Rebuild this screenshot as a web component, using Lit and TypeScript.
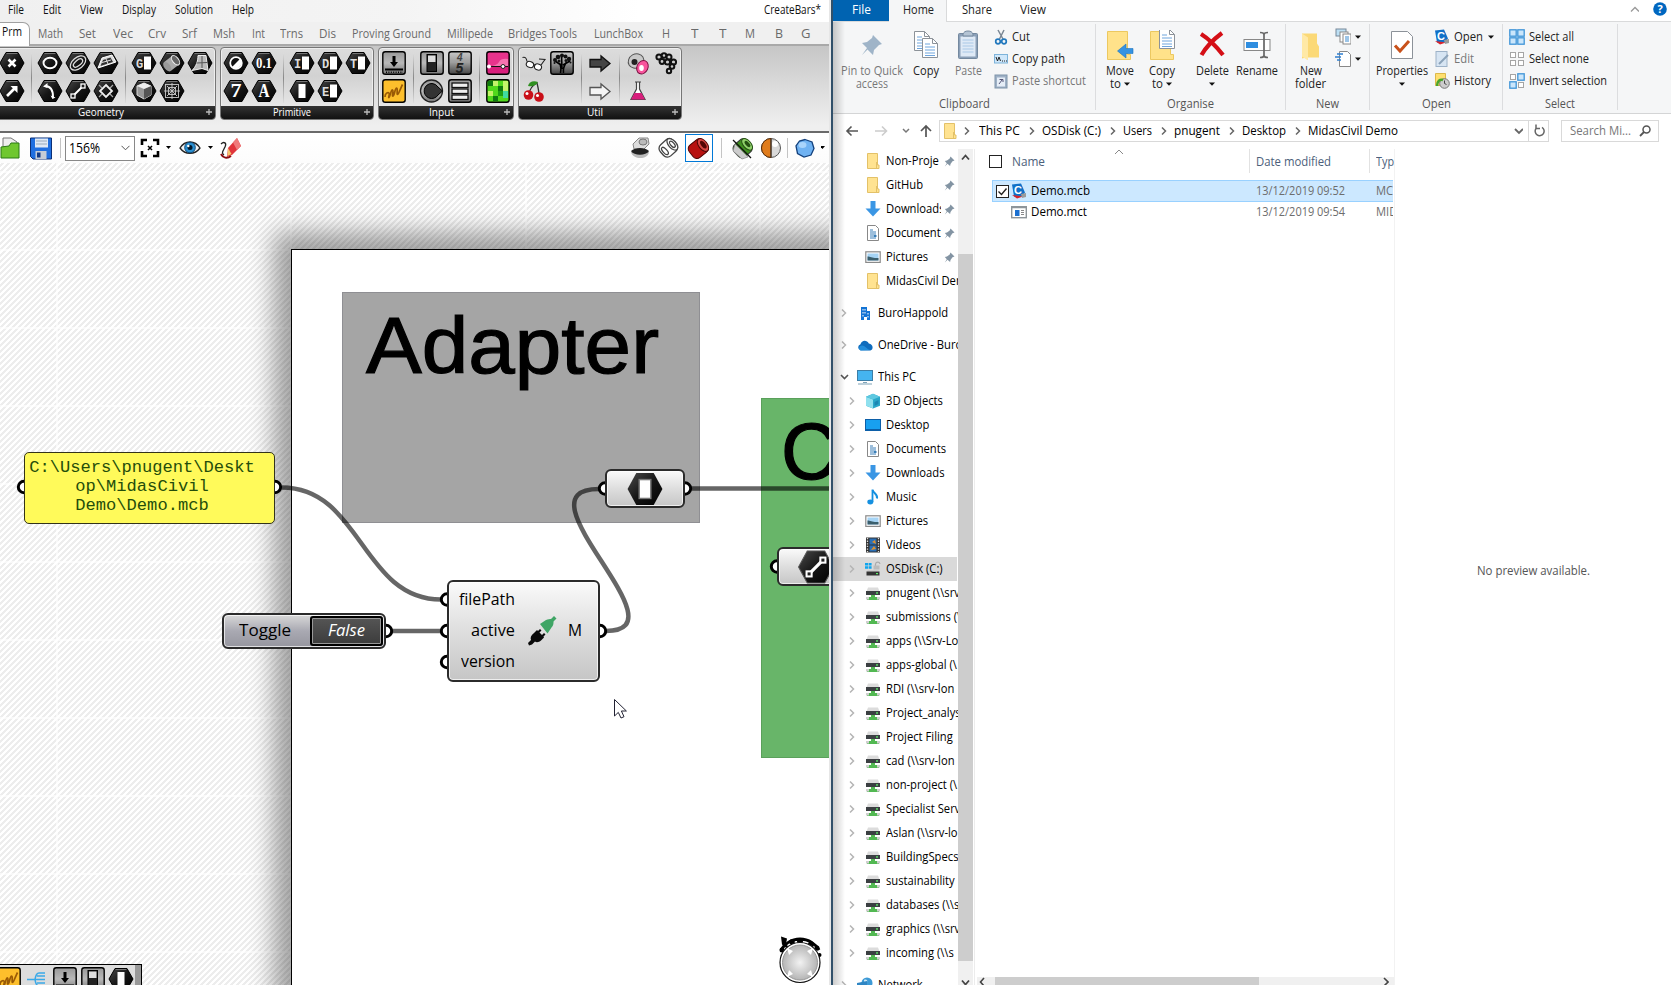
import { LitElement, html, svg, css } from "lit";
import { customElement, property } from "lit/decorators.js";

/** One line of text, squeezed horizontally to a given width (w) or by a factor (k). */
@customElement("fit-label")
class FitLabel extends LitElement {
  @property({ type: Number }) w = 0;
  @property({ type: Number }) k = 0;
  @property() text = "";
  static styles = css`
    :host { display: inline-block; white-space: nowrap; flex: none; }
    span { display: inline-block; transform-origin: 0 50%; white-space: pre; }
  `;
  render() {
    return html`<span>${this.text}</span>`;
  }
  updated() {
    const s = this.renderRoot.querySelector("span") as HTMLElement;
    s.style.transform = "none";
    const nat = s.getBoundingClientRect().width;
    const f = this.w ? (this.w + 1) / nat : this.k || 1;
    s.style.transform = `scaleX(${f})`;
    this.style.width = `${Math.round(nat * f * 10) / 10}px`;
  }
}

const fit = (text: string, w: number) => html`<fit-label .text=${text} .w=${w}></fit-label>`;
const nar = (text: string) => html`<fit-label .text=${text} .k=${0.935}></fit-label>`;

const ic = (w: number, h: number, body: unknown, cls = "") =>
  html`<svg class=${cls} width=${w} height=${h} viewBox="0 0 ${w} ${h}">${body}</svg>`;

const hexShape = svg`<path d="M8 3.500h12l6 10.500-6 10.500H8L2 14z" fill="url(#blk)" stroke="#000" stroke-width="1" stroke-linejoin="round"/><path d="M8.600 4.500h10.800" stroke="#888" stroke-width=".8"/>`;
const hex = (b: unknown) => ic(28, 28, svg`${hexShape}${b}`);
const letterHex = (t: string) =>
  hex(svg`<text x="6" y="18.500" font-family="Liberation Mono" font-size="12" font-weight="bold" fill="#ddd">${t}</text><rect x="14" y="7.500" width="7" height="13" fill="#fff"/>`);
const box = (b: unknown, fill = "url(#gry)") =>
  ic(28, 28, svg`<rect x="2.800" y="2.800" width="22.400" height="22.400" rx="2.500" fill=${fill} stroke="#000" stroke-width="1.400"/>${b}`);

const graffiti = svg`<rect x="4" y="4" width="20" height="20" fill="#fdbf2c"/><path d="M5 20c0-4 3-5 4-4s-1 5 0 4.500 2-8 3.500-7.500-1 6.500.500 6 2-8 3.500-8 0 6.500 1 6.500 3-6 5-10" fill="none" stroke="#9a5a05" stroke-width="1.700"/>`;
const downBoard = svg`<path d="M14 7v7" stroke="#000" stroke-width="3"/><path d="M10 13h8l-4 5z"/><path d="M5 20.500h18" stroke="#000" stroke-width="2"/><path d="M6 23.200h17" stroke="#000" stroke-width="1.600" stroke-dasharray="1 1.400"/>`;
const slider = svg`<rect x="9" y="5.500" width="9.500" height="17" fill="#222" stroke="#000"/><rect x="10" y="6.500" width="7.500" height="6.500" fill="#ddd"/>`;

const G1 = {
  a: [hex(svg`<path d="M10.500 10.500l7 7m0-7l-7 7" stroke="#fff" stroke-width="2.600"/>`), hex(svg`<path d="M9 19l8-8" stroke="#fff" stroke-width="2.600"/><path d="M12.500 9h7v7z" fill="#fff"/>`)],
  b: [
    hex(svg`<ellipse cx="14" cy="14" rx="6.500" ry="5.300" fill="none" stroke="#fff" stroke-width="1.900"/>`),
    hex(svg`<g transform="rotate(-40 14 14)" fill="none" stroke="#ddd"><ellipse cx="14" cy="14" rx="9" ry="5.500" stroke-width="1.300"/><ellipse cx="14" cy="14" rx="5.500" ry="2.700" stroke-width="1.300"/></g>`),
    hex(svg`<path d="M6 19l4-10 10-3 4 7z" fill="#ddd" stroke="#fff"/><path d="M8.500 17l2.500-6 7.500-2.500 2.500 4.500z" fill="#333"/><path d="M14 10l2 5M10 13.500l9-2.500" stroke="#ddd"/>`),
    hex(svg`<path d="M9 9c6 0 8 5 8 11" fill="none" stroke="#fff" stroke-width="2"/><path d="M7 9.500L11.500 6v5zM14.500 18.500l5 2-3 1.500z" fill="#fff"/>`),
    hex(svg`<path d="M10 18l8-8" stroke="#fff" stroke-width="2"/><rect x="7" y="17" width="4" height="4" fill="#222" stroke="#fff" stroke-width="1.300"/><rect x="17" y="7" width="4" height="4" fill="#222" stroke="#fff" stroke-width="1.300"/>`),
    hex(svg`<path d="M14 8l6 6-6 6-6-6z" fill="none" stroke="#eee" stroke-width="1.800"/><path d="M10 11L7 8m11 3l3-3M10 17l-3 3m11-3l3 3" stroke="#aaa" stroke-width="1.200"/>`),
  ],
  c: [
    letterHex("G"),
    hex(svg`<g transform="rotate(-38 14 14)"><rect x="8" y="8.500" width="11" height="11" fill="#aaa"/><ellipse cx="8" cy="14" rx="3" ry="5.500" fill="#999"/><ellipse cx="18.500" cy="14" rx="3" ry="5.500" fill="#666" stroke="#eee"/></g>`),
    hex(svg`<path d="M12 6.500h8l2 15-6-2-10 2c4-4 6-9 6-15z" fill="#bbb" stroke="#eee"/><path d="M16 7v12M10.500 14l11-.5" stroke="#555"/>`),
    hex(svg`<path d="M14 6l7 3v9l-7 4-7-4V9z" fill="#999" stroke="#ddd"/><path d="M14 12l7-3v9l-7 4z" fill="#555"/><path d="M7 9l7 3 7-3-7-3z" fill="#eee"/>`),
    hex(svg`<g stroke="#ccc" stroke-width=".9" fill="none"><rect x="7.500" y="7.500" width="13" height="13"/><path d="M14 6v16M6 14h16M9 9l10 10M19 9L9 19"/><path d="M10.500 10.500h7v7h-7z"/></g>`),
  ],
};
const numTxt = (t: string, s: number) =>
  svg`<text x="14" y=${14 + s * 0.34} text-anchor="middle" font-family="Liberation Serif" font-weight="bold" font-size=${s} fill="#fff" textLength=${s < 17 ? 16 : 11} lengthAdjust="spacingAndGlyphs">${t}</text>`;
const PR = {
  a: [
    hex(svg`<circle cx="14" cy="14" r="5.800" fill="#111" stroke="#fff" stroke-width="1.800"/><path d="M18.200 9.800a6 6 0 0 1-8.400 8.400z" fill="#fff"/>`),
    hex(numTxt("0.1", 15)),
    hex(numTxt("7", 18)),
    hex(numTxt("A", 18)),
  ],
  b: [
    letterHex("I"), letterHex("D"), letterHex("T"),
    hex(svg`<rect x="10.500" y="7" width="7" height="14" fill="#fff"/>`),
    letterHex("E"),
  ],
};
const INP = {
  a: [box(downBoard), box(graffiti, "#fdbf2c")],
  b: [
    box(slider),
    box(svg`<path d="M4 13h20" stroke="#aaa" stroke-width=".6"/><text x="11" y="11.500" font-family="Liberation Sans" font-style="italic" font-weight="bold" font-size="10" fill="#444">4</text><text x="9.500" y="23.500" font-family="Liberation Sans" font-style="italic" font-weight="bold" font-size="14" fill="#222">5</text>`, "url(#gry2)"),
    ic(28, 28, svg`<circle cx="13.500" cy="14" r="11" fill="url(#gry)" stroke="#222" stroke-width="1.300"/><path d="M14 6.500a7.500 7.500 0 0 1 6 3.500l4.500 4-4.500 4a7.500 7.500 0 1 1-6-11.500z" fill="#333" stroke="#000"/>`),
    box(svg`<g fill="#eee" stroke="#111" stroke-width="1.300"><rect x="6" y="6" width="16" height="4.500"/><rect x="6" y="12" width="16" height="4.500"/><rect x="6" y="18" width="16" height="4.500"/></g>`),
  ],
  c: [
    box(svg`<rect x="4" y="4" width="20" height="12" fill="#e8338c"/><path d="M4 17q9 0 11-4t9-3v7z" fill="#f573b0"/><path d="M4 17.500h20" stroke="#111" stroke-width="1.200"/><circle cx="5" cy="17.500" r="2" fill="#fff"/><circle cx="19" cy="17.500" r="2" fill="#fff" stroke="#222"/>`, "#d81e7c"),
    box(svg`<g fill="#0f7a10"><rect x="4" y="4" width="5" height="5"/><rect x="14" y="9" width="5" height="5"/><rect x="9" y="19" width="5" height="5"/></g><g fill="#c4f36a"><rect x="9" y="4" width="5" height="5"/><rect x="19" y="4" width="5" height="10"/><rect x="4" y="14" width="5" height="5"/></g><rect x="19" y="14" width="5" height="7" fill="#3fdca0"/><rect x="14" y="14" width="5" height="5" fill="#1c9e12"/>`, "#50d81c"),
  ],
};
const UT = {
  a: [
    ic(28, 28, svg`<g fill="#fff" stroke="#222" stroke-width="1.100"><path d="M2.500 8.500c3-1 4 1 4.500 4" fill="none"/><ellipse cx="10" cy="15.500" rx="3.800" ry="3" transform="rotate(20 10 15.500)"/><ellipse cx="18" cy="18" rx="3.600" ry="3" transform="rotate(20 18 18)"/><path d="M21 16l4-5.500-6-.5M13.500 15.500l1.500.8" fill="none"/></g>`),
    box(svg`<path d="M12.500 24c1-5 0-8-1-10M15.500 24c-1-5 1-8 3-11M13 16L7 12M15 16l7-4M14 20l-.5-14" stroke="#000" stroke-width="1.600" fill="none"/><g fill="#111"><circle cx="7" cy="11" r="2"/><circle cx="10" cy="8" r="2.300"/><circle cx="14" cy="6.500" r="2"/><circle cx="17.500" cy="7.500" r="2"/><circle cx="21" cy="10" r="2.200"/><circle cx="11" cy="12" r="1.500"/><circle cx="18" cy="11.500" r="1.500"/><circle cx="6.500" cy="14" r="1"/><circle cx="22.500" cy="13.500" r="1"/></g>`, "url(#gry2)"),
    ic(28, 28, svg`<path d="M9 17c1-6 4-9 8-11 1 4 2 8 2 13" fill="none" stroke="#333" stroke-width="1.300"/><path d="M8 9c1-4 5-6 10-4-2 4-6 5-10 4z" fill="#2f8f20"/><circle cx="8.500" cy="18" r="4.800" fill="#c90f18"/><circle cx="19" cy="20" r="4.800" fill="#c90f18"/><circle cx="7" cy="16.500" r="1.500" fill="#fff"/><circle cx="17.500" cy="18.500" r="1.500" fill="#fff"/>`),
  ],
  b: [
    ic(28, 28, svg`<path d="M4 10.500h11V7l9 7.500-9 7.500v-4H4z" fill="#444" stroke="#111" stroke-width="1.300"/>`),
    ic(28, 28, svg`<path d="M4 10.500h11V7l9 7.500-9 7.500v-4H4z" fill="#f5f5f5" stroke="#555" stroke-width="1.300"/>`),
  ],
  c: [
    ic(28, 28, svg`<ellipse cx="12" cy="12" rx="8" ry="7" fill="#c9c9c9" stroke="#555" transform="rotate(-30 12 12)"/><ellipse cx="10.500" cy="13" rx="3" ry="3" fill="#222"/><ellipse cx="18.500" cy="18" rx="5.500" ry="7" fill="#f8549c" stroke="#7c1040" transform="rotate(25 18 18)"/><ellipse cx="17.500" cy="19" rx="2.300" ry="3" fill="#fff"/>`),
    ic(28, 28, svg`<g fill="#ccc" stroke="#111" stroke-width="2"><circle cx="7" cy="8" r="2.600"/><circle cx="12" cy="6.500" r="2.300"/><circle cx="17" cy="8" r="2.500"/><circle cx="10" cy="12.500" r="2.400"/><circle cx="15.500" cy="13" r="2.600"/><circle cx="21.500" cy="13" r="2.600"/><circle cx="20" cy="17.500" r="2.300"/><circle cx="17" cy="22" r="2.200"/></g>`),
    ic(28, 28, svg`<path d="M11 5h6M12.500 5v7L7 22.500h14L15.500 12V5" fill="#fff" stroke="#444" stroke-width="1.200"/><path d="M10.500 16h7l3.500 6.500H7z" fill="#d81e7c"/>`),
  ],
};

const TABS: [string, number, number][] = [
  ["Math", 38, 24], ["Set", 79, 16], ["Vec", 113, 19], ["Crv", 148, 17], ["Srf", 182, 14], ["Msh", 213, 21], ["Int", 252, 12],
  ["Trns", 280, 22], ["Dis", 319, 16], ["Proving Ground", 352, 78], ["Millipede", 447, 45], ["Bridges Tools", 508, 68],
  ["LunchBox", 594, 48], ["H", 662, 7], ["T", 691, 6.5], ["T", 719, 6.5], ["M", 745, 9], ["B", 775, 7], ["G", 801, 8.500],
];

const chevR = html`<svg width="8" height="10" viewBox="0 0 8 10"><path d="M2 1.500L5.500 5 2 8.500" fill="none" stroke="currentColor" stroke-width="1.500"/></svg>`;
const caret = ic(6, 4, svg`<path d="M0 .5h6L3 3.700z" fill="#111"/>`, "caret");

const folder = ic(16, 16, svg`<path d="M2.500.5h10v11.500h1.500v3.500h-11.500z" fill="#ffe391" stroke="#e3c168"/><path d="M11.500 9v6" stroke="#e3c168"/>`);
const drive = ic(16, 16, svg`<path d="M3 2.500h10l1.500 4h-13z" fill="#dcdcdc"/><rect x="1" y="6" width="14" height="4" fill="#3b3f42"/><rect x="11" y="7.300" width="2" height="1.300" fill="#5ef06a"/><path d="M6 10h4v2h4v3H2v-3h4z" fill="#52b852"/><path d="M1 12h3v2.500H1zM12 12h3v2.500h-3z" fill="#cfcfcf"/>`);
const docI = ic(16, 16, svg`<path d="M2.500.5h8l3 3v12h-11z" fill="#fff" stroke="#888"/><path d="M5 5h3M5 7h6M5 9h6M5 11h3M5 13h6" stroke="#3a7fb8"/><rect x="8.500" y="10" width="3" height="2" fill="#3a7fb8"/>`);
const downI = ic(16, 16, svg`<path d="M5.500 0h5v7.500H15.500L8 15.500.5 7.500h5z" fill="#3a96e4"/>`);
const picI = ic(16, 16, svg`<rect x=".8" y="2.800" width="14.400" height="10.600" fill="#fff" stroke="#8a8a8a" stroke-width="1.200"/><rect x="2.500" y="4.500" width="11" height="7" fill="#a6d4f5"/><path d="M2.500 7.500c3 0 5 2 11 1.500v2.500h-11z" fill="#3b5f6d"/>`);
const pcI = ic(16, 16, svg`<rect x=".5" y="1.500" width="15" height="10" fill="#45b4f0" stroke="#3d7ea6"/><path d="M6 13.500h4M1 15h14" stroke="#7fa3b8" stroke-width="1.200"/>`);
const bldI = ic(16, 16, svg`<path d="M4 2h6v4h3v9h-3v-3H7v3H4z" fill="#1273d4"/><path d="M5.500 4h1v1.500h-1zM7.500 4h1v1.500h-1zM5.500 7h1v1.500h-1zM7.500 7h1v1.500h-1zM5.500 10h1v1.500h-1zM10.500 8h1v1.500h-1zM10.500 11h1v1.500h-1z" fill="#fff"/>`);
const cloudI = ic(16, 16, svg`<path d="M3.500 13.500a3.300 3.300 0 0 1 0-6.300C4.500 3 10 2.500 11.800 6.500c4.500.5 5 6 1.500 7z" fill="#0f6cbd"/><path d="M4 13.500c-3-1-2-5 1-5 4 0 5 5 9 4.500z" fill="#2b9be8" opacity=".7"/>`);
const cubeI = ic(16, 16, svg`<path d="M8 .8l7 3v9L8 15.500 1 12.800v-9z" fill="#2aa7c9"/><path d="M1 3.800l7 2.700v9L1 12.800z" fill="#8fe0ee"/><path d="M8 .8l7 3-7 2.700-7-2.700z" fill="#5ec8e0"/><path d="M9.500 9l4-2v4l-4 2z" fill="#1a86b3"/>`);
const deskI = ic(16, 16, svg`<rect x=".5" y="2.500" width="15" height="11" fill="#18a0f0" stroke="#0c5fa8"/><path d="M1 12.500h14" stroke="#0c5fa8"/>`);
const musicI = ic(16, 16, svg`<path d="M7.500.5c.5 4 5.500 4 4.500 9" fill="none" stroke="#1590e0" stroke-width="2"/><path d="M7.500 1v12" stroke="#1590e0" stroke-width="1.800"/><ellipse cx="5.300" cy="13" rx="3" ry="2.400" fill="#1590e0"/>`);
const vidI = ic(16, 16, svg`<rect x="1" y=".5" width="14" height="15" fill="#333"/><path d="M2.500 1v14M13.500 1v14" stroke="#ddd" stroke-width="1.300" stroke-dasharray="1.300 1.300"/><rect x="4.500" y="1.500" width="7" height="6" fill="#2b6fb5"/><rect x="4.500" y="8.500" width="7" height="6" fill="#2b6fb5"/><path d="M7 5l3-2 1 4zM6 13l3-4 2 3z" fill="#e0902a"/>`);
const osI = ic(16, 16, svg`<path d="M0 2h3v2.600H0zM3.600 2h3v2.600h-3zM0 5.200h3v2.600H0zM3.600 5.200h3v2.600h-3z" fill="#10a5ee"/><path d="M10.500 5V3a2.300 2.300 0 0 1 4.500 0" fill="none" stroke="#aaa" stroke-width="1.200"/><rect x="8.500" y="4.500" width="6" height="4" fill="#bbb"/><path d="M3 9h10l1.500 1.500h-13z" fill="#ccc"/><rect x="1.500" y="10.500" width="13" height="4" fill="#333"/><rect x="11" y="12" width="2" height="1.200" fill="#5ef06a"/>`);
const netI = ic(16, 16, svg`<circle cx="10" cy="6" r="5.500" fill="#3d9ad6"/><path d="M7 3c2-1 4 0 3 2s-3 2-3-2z" fill="#cfe9f7"/><path d="M0 6l10-2v8L0 9z" fill="#2f86c4"/>`);
const pin = ic(11, 11, svg`<path d="M6.500.5l4 4-2 .7L6.500 8l-.4 2-2.600-2.200L.8 10.500l2-3.200L.8 5l2.200-.5 2.700-2z" fill="#8394a3"/>`, "pin");

type Row = [string, unknown];
const QUICK: [string, unknown, boolean][] = [
  ["Non-Proje", folder, true], ["GitHub", folder, true], ["Downloads", downI, true], ["Documents", docI, true], ["Pictures", picI, true], ["MidasCivil Demo", folder, false],
];
const PCROWS: Row[] = [
  ["3D Objects", cubeI], ["Desktop", deskI], ["Documents", docI], ["Downloads", downI], ["Music", musicI], ["Pictures", picI], ["Videos", vidI], ["OSDisk (C:)", osI],
  ["pnugent (\\\\srv", drive], ["submissions (\\", drive], ["apps (\\\\Srv-Lo", drive], ["apps-global (\\", drive], ["RDI (\\\\srv-lon", drive], ["Project_analys", drive],
  ["Project Filing", drive], ["cad (\\\\srv-lon", drive], ["non-project (\\", drive], ["Specialist Serv", drive], ["Aslan (\\\\srv-lo", drive], ["BuildingSpecs", drive],
  ["sustainability", drive], ["databases (\\\\s", drive], ["graphics (\\\\srv", drive], ["incoming (\\\\s", drive],
];
const CRUMBS: [string, number][] = [["This PC", 40], ["OSDisk (C:)", 58], ["Users", 28], ["pnugent", 45], ["Desktop", 43]];

const mcb = ic(16, 16, svg`<path d="M1 1.500l9-1 4 9-3 4H3z" fill="#1170c8"/><path d="M1 12l5 3.500 6-2z" fill="#d8232a"/><text x="3" y="11" font-family="Liberation Sans" font-weight="bold" font-size="11" fill="#fff">C</text><path d="M10 11l5-1v4l-4 1z" fill="#9a9a9a"/>`);
const mct = ic(16, 14, svg`<rect x=".7" y="1.700" width="14.600" height="11" fill="#fff" stroke="#8d9499" stroke-width="1.400"/><path d="M1 2.500h14" stroke="#8d9499" stroke-width="1.500"/><rect x="4" y="5" width="4.500" height="6" fill="#1a6fd0"/><path d="M10 5.500h3M10 7.500h3M10 9.500h3" stroke="#888"/>`);
const bigFolder = svg`<path d="M1.500 1.500h20v23h3v5h-23z" fill="#ffe28a" stroke="#ecc860"/>`;
const sheet = (x: number, y: number) => svg`<path d="M${x} ${y}h10l5 5v14h-15z" fill="#fff" stroke="#8c9299"/><path d="M${x + 10} ${y}v5h5" fill="none" stroke="#8c9299"/><path d="M${x + 2.500} ${y + 5.500}h5m-5 3h10m-10 3h10m-10 3h10m-10 2.500h10" stroke="#6fa5dd"/>`;

@customElement("app-root")
class AppRoot extends LitElement {
  static styles = css`
    :host { display: block; width: 1671px; height: 985px; overflow: hidden; font-family: "Open Sans", "Noto Sans", sans-serif; font-size: 12px; line-height: 16px; color: #000; background: #fff; }
    * { box-sizing: border-box; }
    svg { display: block; flex: none; }
    .defs { position: absolute; width: 0; height: 0; }
    .desk { display: flex; height: 985px; }

    .gh { width: 829px; display: flex; flex-direction: column; overflow: hidden; }
    .menu { height: 22px; flex: none; display: flex; gap: 19px; padding: 2px 8px 0; background: linear-gradient(90deg, #f0f0f0 0, #f4f4f4 400px, #fff 640px); color: #111; }
    .menu .doc { margin-left: auto; }
    .tabs { height: 24px; flex: none; display: flex; background: #f0f0f0; border-bottom: 2px solid #a9a9a9; color: #6a6a6a; }
    .tab0 { width: 30px; height: 24px; background: #fff; border: 1px solid #a0a0a0; border-left: 0; border-bottom: 0; border-radius: 0 7px 0 0; padding: 1px 0 0 2px; color: #111; }
    .tabx { width: 8px; }
    .tab { padding-top: 4px; }
    .ribbon { height: 85px; flex: none; display: flex; gap: 4px; padding-top: 1px; background: linear-gradient(#c6c6c6, #e0e0e0 50px, #efefef 80px); }
    .grp { height: 73px; border: 1px solid #777; border-radius: 4px; background: linear-gradient(#dcdcdc, #d2d2d2 40%, #efefef); overflow: hidden; display: flex; flex-direction: column; box-shadow: inset 0 0 0 1px #eee; }
    .grp:first-child { margin-left: -4px; }
    .sets { display: flex; height: 58px; padding: 1px 1px 0; }
    .set { display: grid; grid-auto-rows: 28px; grid-template-columns: repeat(var(--n), 28px); }
    .n1 { --n: 1; } .n2 { --n: 2; } .n3 { --n: 3; }
    .vs { width: 10px; padding: 4px 4.500px; }
    .vs::after { content: ""; display: block; width: 1px; height: 50px; background: linear-gradient(#ddd, #888, #ddd); }
    .cap { flex: 1; background: linear-gradient(#333, #111); color: #fff; display: grid; grid-template-columns: 1fr 10px; justify-items: center; align-items: center; font-size: 11.500px; line-height: 12px; padding-bottom: 1px; }
    .cap svg { justify-self: start; }

    .bar { height: 32px; flex: none; display: flex; align-items: center; border-top: 2px solid #6a6a6a; background: linear-gradient(#fff, #fcfcfc); }
    .combo { width: 70px; height: 25px; border: 1px solid #888; background: #fff; display: flex; align-items: center; justify-content: space-between; padding: 0 4px 0 3px; font-size: 14px; margin: 0 5px 0 4px; }
    .vline { width: 1px; height: 20px; background: #c4c4c4; }
    .on { border: 1px solid #0078d7; width: 28px; height: 28px; display: flex; align-items: center; justify-content: center; }
    .right { margin-left: auto; display: flex; align-items: center; }

    .canvas { flex: 1; position: relative; overflow: hidden; background-color: #fff; }
    .plane { position: absolute; left: 0; top: -163px; width: 829px; height: 985px; }
    .plane > * { position: absolute; }
    .hatch { inset: 0; background: repeating-linear-gradient(135deg, #fff 0 2.100px, #ededed 2.100px 4.240px); }
    .glines { inset: 0; }
    .page { left: 291px; top: 249px; width: 700px; height: 900px; background: #fff; border: 1px solid #000; box-shadow: 0 0 24px 17px rgba(0,0,0,.36); }
    .g { font-family: "Liberation Sans", Arial, sans-serif; font-size: 79px; line-height: 92px; -webkit-text-stroke: 1.200px #000; }
    .ga { left: 342px; top: 292px; width: 358px; height: 231px; background: #a5a5a5; border: 1px solid #8f8f93; padding: 7px 0 0 23px; }
    .gb { left: 761px; top: 398px; width: 80px; height: 360px; background: #68b569; border: 1px solid #5aa05b; padding: 7px 0 0 19px; }
    .node { border: 2px solid #2b2b2b; border-radius: 6px; background: linear-gradient(#fafafa, #dedede 50%, #c6c6c6); box-shadow: inset 0 0 0 1px rgba(255,255,255,.7); display: flex; }
    .panel { left: 24px; top: 452px; width: 251px; height: 71.500px; background: #fffa5a; border: 1.500px solid #33331a; border-radius: 5px; font-family: "Liberation Mono", monospace; font-size: 17.100px; line-height: 19px; color: #244d0a; display: flex; flex-direction: column; align-items: center; padding: 5px 15px 0 0; }
    .panel div { white-space: pre; }
    .toggle { left: 222px; top: 613px; width: 164px; height: 36px; background: linear-gradient(#d8d8d8, #a9a9b2 50%, #96969f); padding: 1px; align-items: center; justify-content: space-between; padding-left: 15px; font-size: 16px; }
    .toggle fit-label { margin-top: -2px; }
    .false { width: 73px; height: 30px; border: 2px solid #000; border-radius: 3px; background: linear-gradient(#555, #3c3c3c); box-shadow: inset 0 0 0 1px #999; color: #fff; font-style: italic; display: flex; justify-content: center; align-items: center; padding-right: 1px; }
    .comp { left: 447px; top: 580px; width: 153px; height: 102px; font-size: 16.500px; align-items: center; padding: 0 0 2px 2px; }
    .ins { width: 64px; display: flex; flex-direction: column; align-items: flex-end; gap: 13.300px; line-height: 18px; }
    .comp svg { margin: 2px 11px 0 12px; }
    .param { left: 605px; top: 469px; width: 80px; height: 39px; align-items: center; justify-content: center; padding-right: 1px; }
    .param2 { left: 777px; top: 547px; width: 80px; height: 39px; align-items: center; padding-left: 18px; }
    .strip { left: -6px; top: 964px; width: 148px; height: 30px; border: 1px solid #000; background: linear-gradient(90deg, #ddd 140px, #999 140px); display: flex; }

    .gap { width: 4px; background: linear-gradient(90deg, #e6e6e6 2px, #31506a 2px); }

    .ex { flex: 1; display: flex; flex-direction: column; background: #fff; color: #222; min-width: 0; position: relative; }
    .shade { position: absolute; left: 0; top: 22px; bottom: 0; width: 12px; background: linear-gradient(90deg, rgba(0,0,0,.2), transparent); pointer-events: none; }
    .etabs { height: 22px; flex: none; display: flex; border-bottom: 1px solid #d9dadb; }
    .etabs div { display: flex; padding-top: 2px; }
    .etabs .file { width: 56px; height: 21px; background: #0063b1; color: #fff; padding-left: 19px; }
    .etabs .home { width: 58px; height: 22px; background: #f5f6f7; border-right: 1px solid #d9dadb; padding-left: 14px; }
    .etabs .help { margin-left: auto; padding-right: 4px; gap: 14px; }
    .rib { height: 92px; flex: none; display: flex; background: #f5f6f7; border-bottom: 1px solid #d4d5d6; }
    .rg { height: 86px; margin-top: 2px; border-right: 1px solid #dcdddf; display: flex; flex-direction: column; align-items: center; }
    .rg > .lab { margin-top: auto; color: #555; height: 16px; margin-bottom: -2px; }
    .rgb { display: flex; width: 100%; height: 70px; }
    .big { display: flex; flex-direction: column; align-items: center; line-height: 13px; padding-top: 6px; }
    .big svg { margin-bottom: 4px; }
    .big .caret { margin: 0; }
    .big .r { display: flex; gap: 3px; align-items: center; }
    .dim { color: #777; }
    .list3 { display: flex; flex-direction: column; padding-top: 2px; }
    .list3 div { height: 22px; display: flex; align-items: center; gap: 4px; }
    .addr { height: 35px; flex: none; display: flex; align-items: center; padding: 0 12.500px 1px 12px; }
    .abox { margin-left: 7px; width: 610px; height: 22px; border: 1px solid #d9d9d9; display: flex; align-items: center; color: #000; padding-left: 2px; }
    .abox svg { color: #666; }
    .cs { padding: 0 6.500px 0 7.500px; }
    .cs0 { padding: 0 8px 0 5px; }
    .sbox { margin-left: 12px; width: 98px; height: 22px; border: 1px solid #d9d9d9; display: flex; align-items: center; color: #777; padding-left: 8px; gap: 8px; }
    .bodyr { flex: 1; display: flex; min-height: 0; }
    .nav { width: 124.500px; padding-top: 0; overflow: hidden; color: #000; }
    .nr { height: 24px; display: flex; align-items: center; overflow: hidden; white-space: nowrap; }
    .nr.l1 { padding-left: 7px; }
    .nr.l2 { padding-left: 14.500px; }
    .nr.q { padding-left: 32px; }
    .nr > i { width: 14px; color: #b5b5b5; display: flex; flex: none; }
    .nr.l1 > i + svg { margin: 0 5px 0 3px; }
    .nr.l2 > svg { margin: 0 5px 0 3.500px; }
    .nr.q > svg { margin-right: 5px; }
    .nr.q .tx { width: 55px; overflow: hidden; display: flex; }
    .nr.q.np .tx { width: 80px; }
    .nr.q .pin { margin: 0 0 0 3px; }
    .sel { background: #d9d9d9; width: 124px; }
    .s8 { height: 8px; }
    .vsb { width: 15px; background: #f0f0f0; display: flex; flex-direction: column; align-items: center; padding-top: 5px; }
    .vsb .th { width: 15px; height: 708px; margin-top: 93px; background: #cdcdcd; }
    .files { width: 421px; margin-left: 1.500px; border-left: 1px solid #ececec; border-right: 1px solid #f2f2f2; display: flex; flex-direction: column; overflow: hidden; }
    .hd { height: 24px; display: flex; color: #4c607a; }
    .hd > div { border-right: 1px solid #e2e2e2; height: 24px; padding: 5px 0 0; display: flex; }
    .hd > .c3 { border: 0; padding-left: 6px; }
    .ck { width: 13px; height: 13px; border: 1px solid #222; background: #fff; flex: none; }
    .hd > .c1 { width: 275px; padding-left: 14px; gap: 10px; }
    .c1 .ck { margin-top: 1px; }
    .sort { margin-left: 59px; margin-top: -6px; }
    .hd > .c2 { width: 120px; padding-left: 6px; }
    .fr { height: 21px; margin: -1px 1px 0 17px; display: flex; align-items: center; color: #000; overflow: hidden; border: 1px solid transparent; border-right: 0; }
    .fr.on2 { background: #cce8ff; border-color: #99d1ff; height: 22px; margin-top: 7px; }
    .fr .n { width: 258px; flex: none; display: flex; align-items: center; padding-left: 3px; padding-right: 6px; }
    .fr .dt { width: 125px; flex: none; color: #6d6d6d; display: flex; padding-left: 5px; }
    .fr .ty { color: #6d6d6d; width: 18px; overflow: hidden; display: flex; flex: none; }
    .fr .sp { width: 13px; height: 13px; }
    .fr .n > svg { margin: 0 4px 0 2px; }
    .hsb { margin-top: auto; height: 8px; background: #f0f0f0; display: flex; margin-left: 2px; overflow: hidden; }
    .hsb .t { width: 264px; margin-left: 10px; background: #cdcdcd; margin-right: 122px; }
    .prev { flex: 1; display: flex; justify-content: center; padding: 414px 0 0 1px; color: #555; }
  `;

  grp(name: string, w: number, wd: number, sets: [string, unknown[]][]) {
    return html`<div class="grp" style="width:${wd}px"><div class="sets">${sets.map(
      ([c, items], i) => html`${i ? html`<div class="vs"></div>` : ""}<div class="set ${c}">${items}</div>`
    )}</div><div class="cap">${fit(name, w)}${ic(8, 8, svg`<path d="M4 1v6M1 4h6" stroke="#bbb" stroke-width="1.300"/>`)}</div></div>`;
  }

  grasshopper() {
    const ends = TABS.map((t, i) => (i + 1 < TABS.length ? TABS[i + 1][1] : 829) - t[1]);
    return html`<div class="gh">
      <div class="menu">${fit("File", 15)}${fit("Edit", 17)}${fit("View", 22)}${fit("Display", 33)}${fit("Solution", 37)}${fit("Help", 21)}<span class="doc">${fit("CreateBars*", 56)}</span></div>
      <div class="tabs"><div class="tab0">${fit("Prm", 19)}</div><div class="tabx"></div>
        ${TABS.map((t, i) => html`<div class="tab" style="width:${ends[i]}px">${fit(t[0], t[2])}</div>`)}</div>
      <div class="ribbon">
        ${this.grp("Geometry", 45, 220, [["n1", G1.a], ["n3", G1.b], ["n3", G1.c]])}
        ${this.grp("Primitive", 37, 154, [["n2", PR.a], ["n3", PR.b]])}
        ${this.grp("Input", 24, 136, [["n1", INP.a], ["n2", INP.b], ["n1", INP.c]])}
        ${this.grp("Util", 15, 164, [["n2", UT.a], ["n1", UT.b], ["n2", UT.c]])}
      </div>
      <div class="bar">
        ${ic(22, 24, svg`<path d="M3 8V2h8l6 4v6H3z" fill="#eee" stroke="#777"/><path d="M1 22V11l8-1 2-3h8v15z" fill="#6fc72f" stroke="#2b7a14"/>`)}
        ${ic(38, 24, svg`<path d="M8.500 2h21v21H11l-2.500-2.500z" fill="#1f6fe0" stroke="#0b2f75"/><rect x="13" y="2.500" width="13" height="9" fill="#dfe9f5"/><path d="M14 5h11M14 8h11" stroke="#9ab"/><rect x="13.500" y="15" width="11" height="8" fill="#c6cdd6"/><rect x="15" y="16.500" width="3.500" height="5" fill="#123a86"/>`)}
        <div class="vline"></div>
        <div class="combo">${fit("156%", 30)}${ic(9, 6, svg`<path d="M.5.8l4 4 4-4" fill="none" stroke="#555"/>`)}</div>
        ${ic(20, 20, svg`<path d="M2 7V2h5M13 2h5v5M18 13v5h-5M7 18H2v-5" fill="none" stroke="#000" stroke-width="2.600"/><path d="M8 8l4 4m0-4l-4 4" stroke="#000" stroke-width="1.500"/>`)}
        <svg width="19" height="6" viewBox="-6 0 19 6"><path d="M0 1h5L2.500 4z"/></svg>
        ${ic(22, 18, svg`<path d="M1 9c5-8 15-8 20 0-5 7-15 7-20 0z" fill="#f4f4f4" stroke="#222" stroke-width="1.300"/><circle cx="11" cy="8.500" r="5.300" fill="#2a8fd0" stroke="#0e4a7a"/><circle cx="11" cy="8.500" r="2.500" fill="#02182b"/><circle cx="9.300" cy="7" r="1.200" fill="#fff"/>`)}
        <svg width="19" height="6" viewBox="-7 0 19 6"><path d="M0 1h5L2.500 4z"/></svg>
        ${ic(22, 22, svg`<path d="M1 7c3-3 6-1 4 3s-4 6-1 8" fill="none" stroke="#222" stroke-width="1.300"/><path d="M8 11l9-10 4 8-9 9-5 2z" fill="#e0353b"/><path d="M13 5.500l4-4.500 4 8-4 4z" fill="#f07a7a"/><path d="M8 11l3.500 6-4 2z" fill="#f6c66b"/><path d="M1 17c2 4 6 5 10 2" stroke="#8a0b10" stroke-width="2" fill="none"/>`)}
        <div class="right">
          ${ic(28, 24, svg`<g transform="translate(-2 0)"><path d="M9 13l-1-5 6-6h9l1 6-6 6z" fill="#ddd" stroke="#888"/><path d="M6 16c3-4 15-4 18 0-1 8-16 8-18 0z" fill="#bbb"/><path d="M6 15c4-4 14-4 18 0-3 5-15 5-18 0z" fill="#222"/><ellipse cx="18" cy="6" rx="4" ry="3" fill="#bbb" stroke="#777"/></g>`)}
          ${ic(30, 24, svg`<g transform="rotate(-42 14 12)" fill="#fff" stroke="#444" stroke-width="1.300"><rect x="5" y="4" width="17" height="15" rx="5"/><ellipse cx="19" cy="11.500" rx="3.800" ry="7"/><ellipse cx="19" cy="11.500" rx="1.800" ry="3.800"/><ellipse cx="9" cy="11.500" rx="2" ry="4.500"/></g>`)}
          <div class="on">${ic(26, 24, svg`<g transform="rotate(-38 13 12)"><rect x="3" y="4" width="18" height="16" rx="5" fill="#b8110f" stroke="#4c0504"/><ellipse cx="18" cy="12" rx="4.300" ry="7.500" fill="#d84743" stroke="#4c0504"/><ellipse cx="18.500" cy="12" rx="2.200" ry="4.500" fill="#520504"/></g>`)}</div>
          <svg width="18" height="20" viewBox="0 0 18 20"><path d="M8.500 0v20" stroke="#c4c4c4"/></svg>
          ${ic(24, 24, svg`<g transform="rotate(-42 12 12)"><rect x="3" y="4" width="17" height="16" rx="5" fill="#3f8f1f" stroke="#333"/><ellipse cx="17.500" cy="12" rx="3.800" ry="7" fill="#8fd06a" stroke="#245012"/><ellipse cx="18" cy="12" rx="1.800" ry="3.800" fill="#245012"/></g><path d="M4 8l13 13-6 2-9-8z" fill="#ccc" stroke="#888" stroke-width=".7"/><path d="M2 4l18 18" stroke="#111" stroke-width="1.300"/>`)}
          ${ic(32, 24, svg`<circle cx="16" cy="12" r="9.500" fill="#d9d9d9" stroke="#555"/><path d="M16 2.500a9.500 9.500 0 0 0 0 19z" fill="#e07c1c" stroke="#5c2d05"/><path d="M16 3v18" stroke="#333"/><circle cx="20" cy="8" r="3" fill="#fff"/>`)}
          <div class="vline"></div>
          ${ic(33, 24, svg`<path d="M17 3.500l7 2.500 2 6.500-3 6.500-7 2-6.500-3.500L8 10l3.500-5z" fill="#6fb2f2" stroke="#12407c" stroke-width="1.300"/><ellipse cx="14.500" cy="9" rx="4" ry="3" fill="#a9d4fb"/>`)}
          <svg width="8" height="6" viewBox="0 0 8 6"><path d="M-1 1h5L1.500 4z"/></svg>
        </div>
      </div>
      <div class="canvas"><div class="plane">
        <div class="hatch"></div>
        <svg class="glines" width="829" height="985">${[57, 291, 526, 760].map((x) => svg`<path d="M${x} 163v822" stroke="#fff" stroke-width="1.500" opacity=".85"/>`)}${[172, 250, 328, 406, 484, 562, 640, 718, 796, 874, 952].map((y) => svg`<path d="M0 ${y}h829" stroke="#fff" stroke-width="1.500" opacity=".85"/>`)}</svg>
        <div class="page"></div>
        <div class="g ga">${fit("Adapter", 292)}</div>
        <div class="g gb">C</div>
        <svg width="829" height="985">
          <g fill="none" stroke="#000" stroke-opacity=".6" stroke-width="4.500">
            <path d="M282 487.500C361 487.500 362 599.500 441 599.500M392 631h49M606 631C688 631 512 489 599 489M692 488.500h137"/>
          </g>
          <g fill="#fff" stroke="#000" stroke-width="3">
            ${[[24, 487], [275, 487], [386, 631], [447, 599.500], [447, 631], [447, 662], [600, 631], [605, 488.500], [685, 488.500], [777, 566.500]].map(([x, y]) => svg`<circle cx=${x} cy=${y} r="5.700"/>`)}
          </g>
        </svg>
        <div class="panel"><div>C:\\Users\\pnugent\\Deskt</div><div>op\\MidasCivil</div><div>Demo\\Demo.mcb</div></div>
        <div class="node toggle">${fit("Toggle", 51)}<div class="false">${fit("False", 36)}</div></div>
        <div class="node comp"><div class="ins">${fit("filePath", 55)}${fit("active", 43)}${fit("version", 53)}</div>
          ${ic(30, 30, svg`<path d="M1 27l3-3c-1-2 0-5 3-7l3-3 1 1 2-2 1.500 1.500-2 2 2.500 2.500 2-2 1.500 1.500-2 2 .5 1-3 3c-2 2-5 2-6 1l-3 3-3 1z" fill="#0a0a0a"/><path d="M13 8l6-4c2-1 4-1 5-1l3-3 2.500 2.500-3 3c0 2 0 4-2 6l-4 6z" fill="#3fa565"/>`)}
          ${fit("M", 13)}</div>
        <div class="node param"><svg width="38" height="34" viewBox="1 2.300 26 23.400"><path d="M8 3h12l6 11-6 11H8L2 14z" fill="url(#blk)"/><rect x="10" y="7.500" width="8" height="13" fill="#fff" stroke="#777"/></svg></div>
        <div class="node param2"><svg width="38" height="34" viewBox="1 2.300 26 23.400"><path d="M8 3h12l6 11-6 11H8L2 14z" fill="url(#blk)" stroke="#555" stroke-width=".7"/><path d="M10 18l8-8" stroke="#fff" stroke-width="2.200"/><rect x="7.500" y="17" width="3.500" height="3.500" fill="#222" stroke="#fff" stroke-width="1.400"/><rect x="17" y="7.500" width="3.500" height="3.500" fill="#222" stroke="#fff" stroke-width="1.400"/></svg></div>
        <svg width="829" height="985">
          <path d="M614.500 699.500v16.500l3.800-3.600 2.700 5.600 3-1.300-2.600-5.700h5z" fill="#fff" stroke="#223" stroke-width="1"/>
          <path d="M781 950a22 22 0 0 1 38 0" fill="none" stroke="#000" stroke-width="3"/>
          <g fill="#000"><circle cx="792" cy="942" r="2.800"/><circle cx="800" cy="941" r="3"/><circle cx="811" cy="944.500" r="3"/><circle cx="817" cy="948" r="2.500"/><circle cx="782" cy="950" r="2.500"/><circle cx="819.500" cy="955" r="2"/></g>
          <path d="M781 936.500l6 2-1 6 4 3-3 1-5-4z"/>
          <circle cx="800" cy="962.500" r="20" fill="#fff" stroke="#111" stroke-width="1.200"/>
          <circle cx="800" cy="962.500" r="17.500" fill="url(#sph)" stroke="#999"/>
          <path d="M787 948l6 3-4 4zM813 948l-6 3 4 4zM787 977l6-3-4-4zM813 977l-6-3 4-4z" fill="#fff"/>
        </svg>
        <div class="strip">${box(graffiti, "#fdbf2c")}${ic(28, 28, svg`<path d="M4 14.500h8M22 8h-6q-3 0-4 6.500 1 6.500 4 6.500h6M12 14.500h10M14 11h8M14 18h8" fill="none" stroke="#3aa9e8" stroke-width="1.600"/>`)}${box(downBoard)}${box(slider)}${hex(svg`<rect x="10.500" y="7" width="7" height="14" fill="#fff"/>`)}</div>
      </div></div>
    </div>`;
  }

  explorer() {
    const bigs = (icon: unknown, l1: unknown, l2: unknown, w: number, dim = false) =>
      html`<div class="big ${dim ? "dim" : ""}" style="width:${w}px">${icon}${l1}${l2}</div>`;
    return html`<div class="ex">
      <div class="etabs"><div class="file">${fit("File", 18)}</div><div class="home">${fit("Home", 30)}</div><div style="padding-left:15px">${fit("Share", 29)}</div><div style="padding-left:28px">${fit("View", 25)}</div>
        <div class="help">${ic(10, 14, svg`<path d="M2 9.500L6 5.500l4 4" fill="none" stroke="#999" stroke-width="1.300"/>`)}${ic(14, 14, svg`<circle cx="7" cy="7" r="6.800" fill="#0067c0"/><text x="7" y="11" text-anchor="middle" font-size="11" font-weight="bold" fill="#fff">?</text>`)}</div></div>
      <div class="rib">
        <div class="rg" style="width:263px"><div class="rgb">
          ${bigs(ic(30, 30, svg`<path d="M16 4l9 9-3 1-5 5-1 5-5.500-5.500L5 24l5-7L5 12l5-1 5-4z" fill="#9fb4c8" transform="translate(0 1)"/>`), fit("Pin to Quick", 61), fit("access", 31), 77, true)}
          ${bigs(ic(26, 30, svg`${sheet(1.500, 1.500)}${sheet(9.500, 8.500)}`), fit("Copy", 25), "", 32)}
          ${bigs(ic(24, 30, svg`<rect x="2.500" y="3.500" width="19" height="25" rx="1" fill="#8ba0b8" stroke="#74899f"/><rect x="4.500" y="6.500" width="15" height="20" fill="#dfeaf6"/><path d="M7 4c1-2 2-3 5-3s4 1 5 3v2H7z" fill="#b4c4d4" stroke="#74899f"/><path d="M6.500 10h11m-11 3h11m-11 3h11m-11 3h11m-11 3h11" stroke="#a9c8e6"/>`), fit("Paste", 26), "", 52, true)}
          <div class="list3"><div>${ic(14, 16, svg`<path d="M4 1l5 9M10 1L5.500 10" stroke="#7a8794" stroke-width="1.500"/><circle cx="4" cy="12.500" r="2.300" fill="none" stroke="#2278bd" stroke-width="1.700"/><circle cx="10" cy="12.500" r="2.300" fill="none" stroke="#2278bd" stroke-width="1.700"/>`)}${fit("Cut", 17)}</div>
            <div>${ic(14, 10, svg`<rect x=".5" y=".5" width="13" height="8.500" fill="#cfe7fa" stroke="#7db3da"/><path d="M2 3l1.500 4L5 3l1.500 4M8 7h1m1 0h1m1 0h1" stroke="#222" fill="none"/>`)}${fit("Copy path", 52)}</div>
            <div class="dim">${ic(14, 16, svg`<rect x="1" y="2" width="12" height="13" fill="#9fb1c6" stroke="#7f94aa"/><rect x="3" y="4.500" width="8" height="9" fill="#e6eef7"/><path d="M5 11l3-4m-2.500-.5H9V9" stroke="#557" fill="none"/>`)}${fit("Paste shortcut", 73)}</div></div>
        </div><div class="lab">${fit("Clipboard", 50)}</div></div>
        <div class="rg" style="width:190px"><div class="rgb">
          ${bigs(ic(28, 30, svg`${bigFolder}<path d="M27 18.500v5h-7v4.500l-8.500-7 8.500-7v4.500z" fill="#3593e2" stroke="#1c74bf" stroke-width=".6"/>`), fit("Move", 27), html`<span class="r">${fit("to", 10)}${caret}</span>`, 48)}
          ${bigs(ic(26, 30, svg`${bigFolder}<g transform="translate(10 -1)">${sheet(.5, .5)}</g>`), fit("Copy", 25), html`<span class="r">${fit("to", 10)}${caret}</span>`, 36)}
          ${bigs(ic(26, 30, svg`<path d="M2 4c8 5 15 12 22 21M23 3C15 9 7 17 2.500 25" stroke="#d40f16" stroke-width="4.200" fill="none"/>`), fit("Delete", 32), html`<span style="padding-top:5px">${caret}</span>`, 64)}
          ${bigs(ic(28, 30, svg`<rect x="1" y="9.500" width="26" height="11" fill="#fff" stroke="#888"/><rect x="3" y="12" width="12" height="6" fill="#2f8ee0"/><path d="M17 2.500c3 0 4 .5 4 2v21c0 1.500-1 2-4 2M25 2.500c-3 0-4 .5-4 2v21c0 1.500 1 2 4 2" fill="none" stroke="#666" stroke-width="1.700"/>`), fit("Rename", 41), "", 25)}
        </div><div class="lab">${fit("Organise", 46)}</div></div>
        <div class="rg" style="width:84px"><div class="rgb">
          ${bigs(ic(22, 30, svg`<path d="M2 3.500h15v10l2 3v11H6l-4 1z" fill="#fbd977"/><path d="M2 3.500l6 4v23l-6-4z" fill="#ffe9a6"/>`), fit("New", 21), fit("folder", 30), 49)}
          <div class="list3"><div>${ic(16, 18, svg`<rect x="1" y="1" width="10" height="7" fill="#bde0f5" stroke="#789"/><rect x="5" y="4" width="8" height="10" fill="#fff" stroke="#888"/><rect x="8" y="6" width="8" height="10" fill="#fff" stroke="#888"/><path d="M10 9h4m-4 2h4m-4 2h4" stroke="#3a8bd0"/>`)}${caret}</div>
          <div>${ic(16, 18, svg`<path d="M4.500 1.500h8l3 3v12h-11z" fill="#fff" stroke="#888"/><path d="M2 4h6M0 7h6M2 10h4" stroke="#2f7fd0" stroke-width="1.500"/>`)}${caret}</div></div>
        </div><div class="lab">${fit("New", 22)}</div></div>
        <div class="rg" style="width:133px"><div class="rgb">
          ${bigs(ic(24, 30, svg`<path d="M1.500 1.500h16l5 5v22h-21z" fill="#fff" stroke="#8c9299"/><path d="M5 15.500l5 5.500 9-10" fill="none" stroke="#c8511b" stroke-width="3"/>`), fit("Properties", 51), html`<span style="padding-top:5px">${caret}</span>`, 64)}
          <div class="list3"><div>${mcb}${fit("Open", 28)}<span style="padding-left:1px">${caret}</span></div>
            <div class="dim">${ic(16, 16, svg`<rect x="2" y=".5" width="11" height="15" fill="#d7e5f3" stroke="#9db2c8"/><path d="M5 13L14 4" stroke="#8ca3ba" stroke-width="2"/>`)}${fit("Edit", 19)}</div>
            <div>${ic(16, 16, svg`<path d="M1.500.5h10v12h-10z" fill="#ffdf70" stroke="#dcb84a"/><circle cx="10.500" cy="10.500" r="4.800" fill="#ccc" stroke="#777"/><path d="M10.500 7.500v3l2 1" stroke="#444" fill="none"/><path d="M3 13c0-5 3-7 6-6" stroke="#4aa52c" stroke-width="2.500" fill="none"/>`)}${fit("History", 36)}</div></div>
        </div><div class="lab">${fit("Open", 28)}</div></div>
        <div class="rg" style="width:115px"><div class="rgb"><div class="list3" style="padding-left:6px">
          <div>${ic(16, 16, svg`<g fill="#cbe6fb" stroke="#3f95d8" stroke-width="1.300"><rect x=".8" y=".8" width="6.400" height="6.400"/><rect x="8.800" y=".8" width="6.400" height="6.400"/><rect x=".8" y="8.800" width="6.400" height="6.400"/><rect x="8.800" y="8.800" width="6.400" height="6.400"/></g>`)}${fit("Select all", 44)}</div>
          <div>${ic(16, 16, svg`<g fill="#fff" stroke="#a5a5a5"><rect x="1.500" y="1.500" width="5" height="5"/><rect x="9.500" y="1.500" width="5" height="5"/><rect x="1.500" y="9.500" width="5" height="5"/><rect x="9.500" y="9.500" width="5" height="5"/></g>`)}${fit("Select none", 59)}</div>
          <div>${ic(16, 16, svg`<g fill="#fff" stroke="#a5a5a5"><rect x="1.500" y="1.500" width="5" height="5"/><rect x="9.500" y="9.500" width="5" height="5"/></g><g fill="#cbe6fb" stroke="#3f95d8" stroke-width="1.300"><rect x="8.800" y=".8" width="6.400" height="6.400"/><rect x=".8" y="8.800" width="6.400" height="6.400"/></g>`)}${fit("Invert selection", 77)}</div>
        </div></div><div class="lab">${fit("Select", 29)}</div></div>
      </div>
      <div class="addr">
        ${ic(14, 12, svg`<path d="M13 6H2M6.500 1.500L2 6l4.500 4.500" fill="none" stroke="#555" stroke-width="1.600"/>`)}
        <svg width="30" height="12" viewBox="-16 0 30 12"><path d="M0 6h11M7 1.500L11.500 6 7 10.500" fill="none" stroke="#ccc" stroke-width="1.600"/></svg>
        <svg width="22" height="8" viewBox="-13 0 22 8"><path d="M1 2l3 3 3-3" fill="none" stroke="#777" stroke-width="1.500"/></svg>
        <svg width="21" height="14" viewBox="-9 0 21 14"><path d="M6 13V2M1 7l5-5 5 5" fill="none" stroke="#555" stroke-width="1.700"/></svg>
        <div class="abox">${folder}<span class="cs0">${chevR}</span>
          ${CRUMBS.map(([t, w]) => html`${fit(t, w)}<span class="cs">${chevR}</span>`)}
          ${fit("MidasCivil Demo", 89)}
          <svg style="margin-left:auto" width="12" height="8" viewBox="0 0 12 8"><path d="M4 2l4 4 4-4" fill="none" stroke="#666" stroke-width="1.800"/></svg>
          <svg width="25" height="20" viewBox="0 0 25 20"><path d="M5.500 0v20" stroke="#d9d9d9"/><path d="M13 7.500a4.500 4.500 0 1 0 6-1.200M13 3.500v4h4" fill="none" stroke="#666" stroke-width="1.500"/></svg>
        </div>
        <div class="sbox">${fit("Search Mi...", 60)}${ic(12, 12, svg`<circle cx="7.500" cy="4.500" r="3.500" fill="none" stroke="#555" stroke-width="1.500"/><path d="M5 7L1 11" stroke="#555" stroke-width="1.800"/>`)}</div>
      </div>
      <div class="bodyr">
        <div class="nav">
          ${QUICK.map(([t, i, p]) => html`<div class="nr q ${p ? "" : "np"}">${i}<span class="tx">${nar(t)}</span>${p ? pin : ""}</div>`)}
          <div class="s8"></div>
          <div class="nr l1"><i>${chevR}</i>${bldI}${nar("BuroHappold")}</div><div class="s8"></div>
          <div class="nr l1"><i>${chevR}</i>${cloudI}${nar("OneDrive - Buro")}</div><div class="s8"></div>
          <div class="nr l1"><i>${ic(10, 8, svg`<path d="M1 2l3.500 3.500L8 2" fill="none" stroke="#555" stroke-width="1.600"/>`)}</i>${pcI}${nar("This PC")}</div>
          ${PCROWS.map(([t, i]) => html`<div class="nr l2 ${t.startsWith("OSDisk") ? "sel" : ""}"><i>${chevR}</i>${i}${nar(t)}</div>`)}
          <div class="s8"></div>
          <div class="nr l1"><i>${chevR}</i>${netI}${nar("Network")}</div>
        </div>
        <div class="vsb">${ic(9, 7, svg`<path d="M1 5.500l3.500-4 3.500 4" fill="none" stroke="#444" stroke-width="1.800"/>`)}<div class="th"></div>
          <svg width="9" height="24" viewBox="0 -18 9 24"><path d="M1 1.500l3.500 4 3.500-4" fill="none" stroke="#444" stroke-width="1.800"/></svg></div>
        <div class="files">
          <div class="hd"><div class="c1"><span class="ck"></span>${fit("Name", 32)}<svg class="sort" width="10" height="8" viewBox="0 0 10 8"><path d="M1 6l4-4 4 4" fill="none" stroke="#888"/></svg></div><div class="c2">${fit("Date modified", 74)}</div><div class="c3">${fit("Typ", 17)}</div></div>
          <div class="fr on2"><div class="n"><span class="ck">${ic(11, 11, svg`<path d="M1.500 5.500l3 3 5-6" fill="none" stroke="#222" stroke-width="1.400"/>`)}</span>${mcb}${fit("Demo.mcb", 58)}</div><div class="dt">${fit("13/12/2019 09:52", 88)}</div><div class="ty">${nar("MC")}</div></div>
          <div class="fr"><div class="n"><span class="sp"></span>${mct}${fit("Demo.mct", 55)}</div><div class="dt">${fit("13/12/2019 09:54", 88)}</div><div class="ty">${nar("MID")}</div></div>
          <div class="hsb"><svg width="8" height="10" viewBox="0 0 8 10"><path d="M7 1L3.500 5 7 9" fill="none" stroke="#444" stroke-width="1.600"/></svg><div class="t"></div><svg width="8" height="10" viewBox="0 0 8 10"><path d="M3 1l4 4-4 4" fill="none" stroke="#444" stroke-width="1.600"/></svg></div>
        </div>
        <div class="prev">${fit("No preview available.", 112)}</div>
      </div>
      <div class="shade"></div>
    </div>`;
  }

  render() {
    return html`<svg class="defs"><defs>
        <linearGradient id="blk" x1="0" y1="0" x2="1" y2="1"><stop offset="0" stop-color="#4a4a4a"/><stop offset=".5" stop-color="#161616"/><stop offset="1" stop-color="#000"/></linearGradient>
        <linearGradient id="gry" x1="0" y1="0" x2="0" y2="1"><stop offset="0" stop-color="#999"/><stop offset=".5" stop-color="#b9b9b9"/><stop offset="1" stop-color="#777"/></linearGradient>
        <linearGradient id="gry2" x1="0" y1="0" x2="0" y2="1"><stop offset="0" stop-color="#c8c8c8"/><stop offset=".5" stop-color="#999"/><stop offset="1" stop-color="#444"/></linearGradient>
        <radialGradient id="sph"><stop offset="0" stop-color="#f2f2f2"/><stop offset="1" stop-color="#b5b5b5"/></radialGradient>
      </defs></svg>
      <div class="desk">${this.grasshopper()}<div class="gap"></div>${this.explorer()}</div>`;
  }
}
